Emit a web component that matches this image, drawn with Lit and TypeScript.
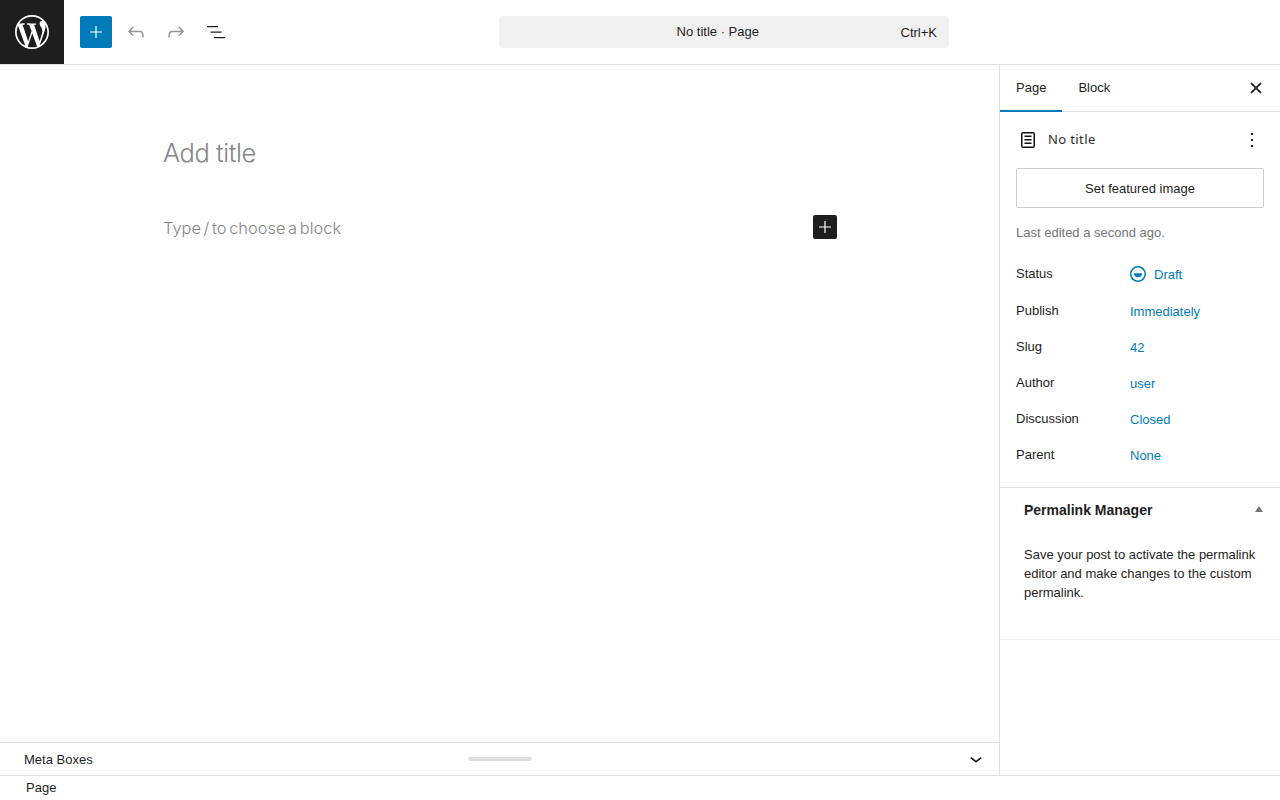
import { LitElement, html, css, svg } from "lit";
import { customElement } from "lit/decorators.js";

const icon = (d: string, size = 24, box = "0 0 24 24") =>
  html`<svg width=${size} height=${size} viewBox=${box} fill="currentColor" aria-hidden="true">${svg`<path d=${d}></path>`}</svg>`;

const WP =
  "M21.469 6.825c.84 1.537 1.318 3.3 1.318 5.175 0 3.979-2.156 7.456-5.363 9.325l3.295-9.527c.615-1.54.82-2.771.82-3.864 0-.405-.026-.78-.07-1.11m-7.981.105c.647-.03 1.232-.105 1.232-.105.582-.075.514-.93-.067-.899 0 0-1.755.135-2.88.135-1.064 0-2.85-.15-2.85-.15-.585-.03-.661.855-.075.885 0 0 .54.061 1.125.09l1.68 4.605-2.37 7.08L5.354 6.9c.649-.03 1.234-.1 1.234-.1.585-.075.516-.93-.065-.896 0 0-1.746.138-2.874.138-.2 0-.438-.008-.69-.015C4.911 3.15 8.235 1.215 12 1.215c2.809 0 5.365 1.072 7.286 2.833-.046-.003-.091-.009-.141-.009-1.06 0-1.812.923-1.812 1.914 0 .89.513 1.643 1.06 2.531.411.72.89 1.643.89 2.977 0 .915-.354 1.994-.821 3.479l-1.075 3.585-3.9-11.61.001.014zM12 22.784c-1.059 0-2.081-.153-3.048-.437l3.237-9.406 3.315 9.087c.024.053.05.101.078.149-1.12.393-2.325.609-3.582.609M1.211 12c0-1.564.336-3.05.935-4.39L7.29 21.709C3.694 19.96 1.212 16.271 1.211 12M12 0C5.385 0 0 5.385 0 12s5.385 12 12 12 12-5.385 12-12S18.615 0 12 0";
const PLUS = "M18 11.4h-5.4V6h-1.2v5.4H6v1.2h5.4V18h1.2v-5.4H18z";
const UNDO = "M18.3 11.7c-.6-.6-1.4-.9-2.3-.9H6.7l2.9-3.3-1.1-1-4.5 5L8.5 16l1-1-2.7-2.7H16c.5 0 .9.2 1.3.5 1 1 1 3.4 1 4.5v.3h1.5v-.2c0-1.5 0-4.3-1.5-5.7z";
const REDO = "M15.6 6.5l-1.1 1 2.9 3.3H8c-.9 0-1.7.3-2.3.9-1.4 1.5-1.4 4.2-1.4 5.6v.2h1.5v-.3c0-1.1 0-3.5 1-4.5.3-.3.7-.5 1.3-.5h9.2L14.5 15l1.1 1.1 4.6-4.6-4.6-5z";
const OUTLINE = "M3 6h11v1.2H3V6zm3.5 5.5h11v1.2h-11v-1.2zM21 17H10v1.2h11V17z";
const CLOSE = "M12 13.06l3.712 3.713 1.061-1.06L13.061 12l3.712-3.712-1.06-1.06L12 10.938 8.288 7.227l-1.061 1.06L10.939 12l-3.712 3.712 1.06 1.061L12 13.061z";
const PAGE = "M15.5 7.5h-7V9h7V7.5Zm-7 3.5h7v1.5h-7V11Zm7 3.5h-7V16h7v-1.5ZM17 4H7a2 2 0 0 0-2 2v12a2 2 0 0 0 2 2h10a2 2 0 0 0 2-2V6a2 2 0 0 0-2-2ZM7 5.5h10a.5.5 0 0 1 .5.5v12a.5.5 0 0 1-.5.5H7a.5.5 0 0 1-.5-.5V6a.5.5 0 0 1 .5-.5Z";
const MORE = "M13 19h-2v-2h2v2zm0-6h-2v-2h2v2zm0-6h-2V5h2v2z";
const DRAFT = "M12 4a8 8 0 1 0 0 16 8 8 0 0 0 0-16Zm0 14.5a6.5 6.5 0 1 1 0-13 6.5 6.5 0 0 1 0 13ZM8 11.2h8a4 4 0 0 1-8 0Z";

const rows: [string, string][] = [
  ["Publish", "Immediately"],
  ["Slug", "42"],
  ["Author", "user"],
  ["Discussion", "Closed"],
  ["Parent", "None"],
];

@customElement("app-root")
export class AppRoot extends LitElement {
  static styles = css`
    :host { display: flex; flex-direction: column; width: 1280px; height: 800px; overflow: hidden; background: #fff; color: #1e1e1e; font: 13px/20px "Liberation Sans", Arial, sans-serif; }
    svg { display: block; flex: none; }
    .top { display: grid; grid-template-columns: 64px 1fr; height: 65px; border-bottom: 1px solid #e0e0e0; flex: none; position: relative; box-sizing: border-box; }
    .logo { background: #1e1e1e; color: #fff; display: flex; align-items: center; justify-content: center; }
    .tools { display: flex; align-items: center; padding-left: 16px; gap: 8px; }
    .ic { width: 32px; height: 32px; display: flex; align-items: center; justify-content: center; }
    .add { background: #007cba; color: #fff; border-radius: 2px; }
    .off { color: #949494; }
    .cmd { position: absolute; left: 499px; top: 16px; width: 450px; height: 32px; box-sizing: border-box; padding: 0 12px; background: #f0f0f0; border-radius: 4px; display: grid; grid-template-columns: 1fr auto; align-items: center; }
    .cmd .t { text-align: center; padding-left: 24px; margin-top: -1px; }
    .cmd .k { margin-top: 1px; }
    .main { flex: 1; display: grid; grid-template-columns: 1000px 280px; min-height: 0; }
    .edit { border-right: 1px solid #e0e0e0; display: flex; flex-direction: column; min-width: 0; }
    .canvas { flex: 1; padding: 72px 162px 0 163px; font-family: Inter, sans-serif; color: #868686; }
    .title { font-size: 25.5px; line-height: 32px; font-weight: 300; letter-spacing: -.45px; }
    .para { display: flex; justify-content: space-between; align-items: center; margin-top: 46px; height: 24px; font-size: 16.4px; font-weight: 300; word-spacing: -1.9px; }
    .para .tx { margin-top: 1px; }
    .ins { width: 24px; height: 24px; background: #1e1e1e; color: #fff; border-radius: 2px; display: flex; align-items: center; justify-content: center; }
    .meta { height: 33px; box-sizing: border-box; border-top: 1px solid #e0e0e0; display: grid; grid-template-columns: 1fr 64px 1fr; align-items: center; padding: 0 24px; }
    .meta .lbl { margin-top: 1px; }
    .grip { width: 64px; height: 4px; border-radius: 2px; background: #ddd; margin-top: -1px; }
    .chev { justify-self: end; margin: 2px -7px 0 0; }
    .side { display: flex; flex-direction: column; min-width: 0; }
    .tabs { flex: none; display: flex; border-bottom: 1px solid #e0e0e0; position: relative; height: 46px; }
    .tab { padding: 0 16px; line-height: 46px; }
    .tab.on { box-shadow: inset 0 -2px 0 #007cba; margin-bottom: -1px; height: 47px; }
    .x { margin-left: auto; margin-right: 12px; display: flex; align-items: center; color: #1e1e1e; }
    .x svg { transform: scale(1.15); }
    .panel { padding: 16px; border-bottom: 1px solid #e0e0e0; height: 376px; box-sizing: border-box; flex: none; }
    .doc { display: flex; align-items: center; height: 24px; }
    .doc .ni { margin-right: 8px; color: #111; }
    .doc .name { font-family: "Noto Sans", sans-serif; flex: 1; letter-spacing: .38px; margin-top: -2px; color: #2f2f2f; }
    .feat { margin-top: 16px; height: 40px; border: 1px solid #ccc; border-radius: 2px; display: flex; align-items: center; justify-content: center; box-sizing: border-box; padding-top: 2px; }
    .edited { margin-top: 14px; color: #757575; padding-top: 1px; }
    .rows { margin-top: 13px; }
    .row { display: grid; grid-template-columns: 114px 1fr; height: 36px; align-items: center; }
    .row .l { margin-top: -2px; }
    .row .v { color: #007cba; display: flex; align-items: center; gap: 8px; }
    .row.st { height: 38px; }
    .row.st svg { margin-top: -2px; }
    .pm { height: 152px; border-bottom: 1px solid #f0f0f0; padding: 12px 16px 0 24px; box-sizing: border-box; flex: none; }
    .pmh { display: flex; justify-content: space-between; align-items: center; font-size: 14px; font-weight: 700; height: 20px; }
    .tri { width: 0; height: 0; border: 4px solid transparent; border-top: 0; border-bottom: 6px solid #72777c; margin-top: -2px; margin-right: 1px; }
    .pmb { margin: 25px 0 0; line-height: 19px; color: #1e1e1e; }
    .foot { height: 25px; flex: none; border-top: 1px solid #e0e0e0; box-sizing: border-box; padding-left: 26px; line-height: 23px; }
  `;

  render() {
    return html`
      <div class="top">
        <div class="logo">${icon(WP, 34, "0 0 24 24")}</div>
        <div class="tools">
          <div class="ic add">${icon(PLUS)}</div>
          <div class="ic off">${icon(UNDO)}</div>
          <div class="ic off">${icon(REDO)}</div>
          <div class="ic">${icon(OUTLINE)}</div>
        </div>
        <div class="cmd"><span class="t">No title · Page</span><span class="k">Ctrl+K</span></div>
      </div>
      <div class="main">
        <div class="edit">
          <div class="canvas">
            <div class="title">Add title</div>
            <div class="para"><span class="tx">Type / to choose a block</span><span class="ins">${icon(PLUS)}</span></div>
          </div>
          <div class="meta">
            <span class="lbl">Meta Boxes</span>
            <span class="grip"></span>
            <svg class="chev" width="12" height="8" viewBox="0 0 12 8" fill="none" stroke="#1e1e1e" stroke-width="1.8"><path d="M.8 1.6 6 5.6 11.2 1.6"></path></svg>
          </div>
        </div>
        <div class="side">
          <div class="tabs">
            <div class="tab on">Page</div>
            <div class="tab">Block</div>
            <div class="x">${icon(CLOSE)}</div>
          </div>
          <div class="panel">
            <div class="doc">
              <span class="ni">${icon(PAGE)}</span>
              <span class="name">No title</span>
              <span class="dots">${icon(MORE)}</span>
            </div>
            <div class="feat">Set featured image</div>
            <div class="edited">Last edited a second ago.</div>
            <div class="rows">
              <div class="row st"><span class="l">Status</span><span class="v">${icon(DRAFT, 16, "4 4 16 16")}Draft</span></div>
              ${rows.map(([l, v]) => html`<div class="row"><span class="l">${l}</span><span class="v">${v}</span></div>`)}
            </div>
          </div>
          <div class="pm">
            <div class="pmh"><span>Permalink Manager</span><span class="tri"></span></div>
            <p class="pmb">Save your post to activate the permalink editor and make changes to the custom permalink.</p>
          </div>
        </div>
      </div>
      <div class="foot">Page</div>
    `;
  }
}
